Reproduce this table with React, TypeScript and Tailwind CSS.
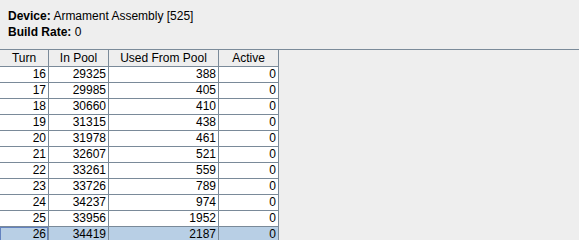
const rows = [
  { turn: 16, pool: 29325, used: 388, active: 0 },
  { turn: 17, pool: 29985, used: 405, active: 0 },
  { turn: 18, pool: 30660, used: 410, active: 0 },
  { turn: 19, pool: 31315, used: 438, active: 0 },
  { turn: 20, pool: 31978, used: 461, active: 0 },
  { turn: 21, pool: 32607, used: 521, active: 0 },
  { turn: 22, pool: 33261, used: 559, active: 0 },
  { turn: 23, pool: 33726, used: 789, active: 0 },
  { turn: 24, pool: 34237, used: 974, active: 0 },
  { turn: 25, pool: 33956, used: 1952, active: 0 },
  { turn: 26, pool: 34419, used: 2187, active: 0 },
];

const headers = ['Turn', 'In Pool', 'Used From Pool', 'Active'];

export default function App() {
  const selected = 26;

  return (
    <div className="w-[579px] h-[240px] overflow-hidden bg-[#eeeeee] text-black text-[12px] font-['Liberation_Sans',Arial,sans-serif]">
      {/* device info */}
      <div className="pt-[8px] pl-[8px] h-[49px] leading-[16px]">
        <div>
          <span className="font-bold">Device:</span> Armament Assembly [525]
        </div>
        <div>
          <span className="font-bold">Build Rate:</span> 0
        </div>
      </div>

      {/* table */}
      <div className="border-t border-[#7a8a99]">
        <div className="grid grid-cols-[49px_60px_110px_60px] w-[279px]">
          {headers.map((h) => (
            <div
              key={h}
              className="h-[17px] leading-[16px] text-center border-r border-b border-[#7a8a99] bg-[#eeeeee]"
            >
              {h}
            </div>
          ))}
          {rows.map((r) => {
            const sel = r.turn === selected;
            const cell = `h-[16px] leading-[15px] text-right pr-[2px] border-r border-b border-[#7a8a99] ${
              sel ? 'bg-[#b8cfe5]' : 'bg-white'
            }`;
            return [
              <div key={`t${r.turn}`} className={`${cell} relative`}>
                {sel && (
                  <div className="absolute inset-0 border border-[#6382bf] pointer-events-none" />
                )}
                {r.turn}
              </div>,
              <div key={`p${r.turn}`} className={cell}>{r.pool}</div>,
              <div key={`u${r.turn}`} className={cell}>{r.used}</div>,
              <div key={`a${r.turn}`} className={cell}>{r.active}</div>,
            ];
          })}
        </div>
      </div>
    </div>
  );
}
